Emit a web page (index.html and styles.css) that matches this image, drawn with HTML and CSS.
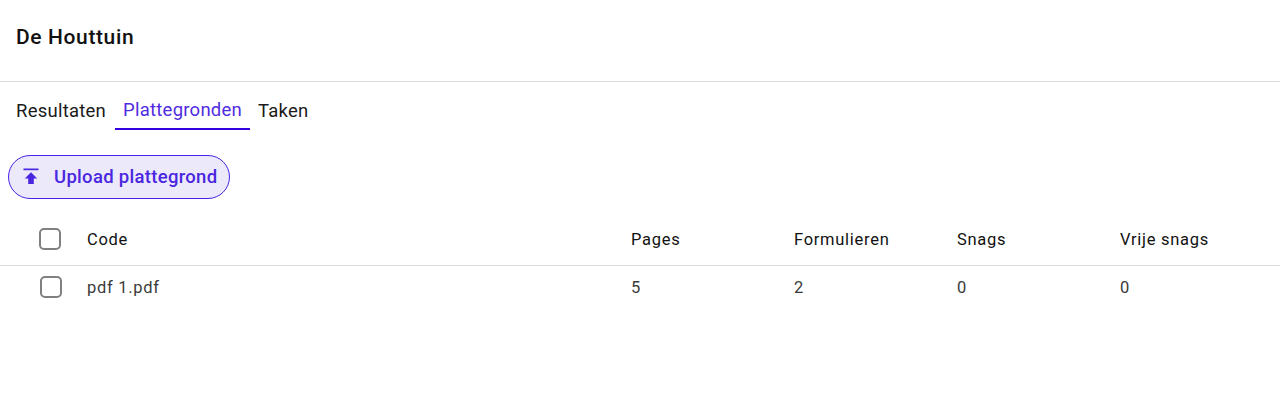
FILE: index.html
```html
<!DOCTYPE html>
<html lang="nl">
<head>
<meta charset="utf-8">
<title>De Houttuin</title>
<link rel="stylesheet" href="styles.css">
</head>
<body>
<header class="title-bar"><h1 class="title">De Houttuin</h1></header>
<nav class="tabs">
  <a class="tab">Resultaten</a>
  <a class="tab tab-active">Plattegronden</a>
  <a class="tab">Taken</a>
</nav>
<div class="actions">
  <button class="upload">
    <svg class="upload-icon" width="18" height="18" viewBox="0 0 18 18"><path d="M1.5 0.5h15v1.700h-15z"/><path d="M9 4.200l6.200 6.200h-3.400v5.600H6.200v-5.600H2.800z"/></svg>
    <span class="upload-label">Upload plattegrond</span>
  </button>
</div>
<div class="table">
  <div class="row head">
    <span class="check"></span><span>Code</span><span>Pages</span><span>Formulieren</span><span>Snags</span><span>Vrije snags</span>
  </div>
  <div class="row body-row">
    <span class="check"></span><span>pdf 1.pdf</span><span>5</span><span>2</span><span>0</span><span>0</span>
  </div>
</div>
</body>
</html>
```
FILE: styles.css
```css
* { box-sizing: border-box; }
html, body { margin: 0; background: #fff; }
body { font-family: Roboto, sans-serif; color: #1a1a1a; overflow: hidden; height: 413px; }
.title-bar { height: 82px; border-bottom: 1px solid #dcdcdc; padding: 0 16px 8px; display: flex; align-items: center; }
.title { margin: 0; font-size: 21px; font-weight: 460; letter-spacing: .62px; color: #111; }
.tabs { display: flex; padding: 8px 7px 0; height: 49px; }
.tab { height: 40px; padding: 2px 9px 0; display: flex; align-items: center; font-size: 18.500px; letter-spacing: .24px; color: #1a1a1a; }
.tab-active { color: #4f2be0; border-bottom: 2px solid #3300e0; padding: 2px 8px 0; width: 135px; flex: none; }
.tab-active + .tab { padding-left: 8px; }
.actions { padding: 24px 8px 0; }
.upload { height: 44px; width: 222px; padding: 0 13px; border: 1px solid #4a22e8; border-radius: 22px; background: #ece9fb; color: #4a26e0; display: flex; align-items: center; gap: 14px; font: 460 18.500px Roboto, sans-serif; letter-spacing: .3px; }
.upload-label { white-space: nowrap; }
.upload-icon { fill: #4a26e0; flex: none; }
.table { margin-top: 16px; }
.row { display: grid; grid-template-columns: 87px 544px 163px 163px 163px 1fr; align-items: center; font-size: 16.500px; letter-spacing: .72px; }
.row .check { margin-left: 39px; }
.head { height: 51px; border-bottom: 1px solid #dcdcdc; font-weight: 420; color: #111; padding-bottom: 2px; }
.body-row { height: 42px; color: #3a3a3a; }
.body-row .check { margin-left: 40px; }
.check { width: 22px; height: 22px; border: 2px solid #808080; border-radius: 5px; display: block; }
```
